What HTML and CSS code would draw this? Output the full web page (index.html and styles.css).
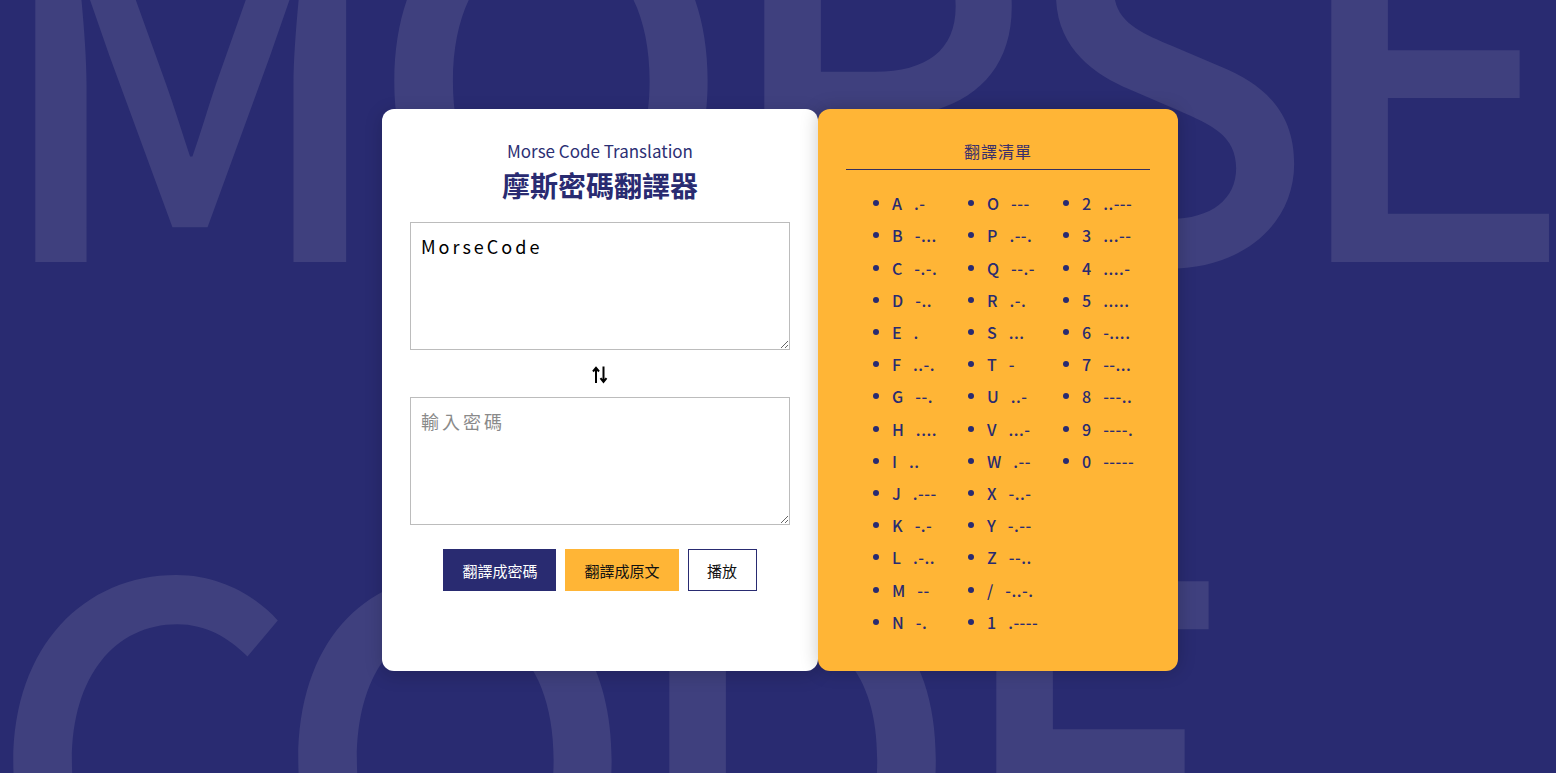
FILE: index.html
```html
<!DOCTYPE html>
<html lang="zh-Hant">
<head>
<meta charset="utf-8">
<title>摩斯密碼翻譯器</title>
<link rel="stylesheet" href="styles.css">
</head>
<body>
<div class="bg-words" aria-hidden="true">
  <div class="bg-line bg-line-1"><span class="gl gl-m">M</span><span class="gl gl-o1">O</span><span class="gl gl-r">R</span><span class="gl gl-s">S</span><span class="gl">E</span></div>
  <div class="bg-line bg-line-2"><span class="gl gl-c">C</span><span class="gl gl-o2">O</span><span class="gl gl-d">D</span><span class="gl">E</span></div>
</div>
<main class="stage">
  <div class="panel">
    <section class="card card-main">
      <p class="subtitle">Morse Code Translation</p>
      <h1 class="title">摩斯密碼翻譯器</h1>
      <textarea class="field">MorseCode</textarea>
      <div class="swap">
        <svg width="16" height="18" viewBox="0 0 16 18" aria-hidden="true">
          <path d="M4 17V2.5M1 5.5L4 1.8L7 5.5" fill="none" stroke="#000" stroke-width="2"/>
          <path d="M11.5 0.5V15.2M8.5 12.2L11.5 15.9L14.5 12.2" fill="none" stroke="#000" stroke-width="2"/>
        </svg>
      </div>
      <textarea class="field" placeholder="輸入密碼"></textarea>
      <div class="actions">
        <button class="btn btn-dark">翻譯成密碼</button>
        <button class="btn btn-yellow">翻譯成原文</button>
        <button class="btn btn-outline">播放</button>
      </div>
    </section>
    <section class="card card-list">
      <h2 class="list-title">翻譯清單</h2>
      <ul class="codes">
        <li><span class="ch">A</span><span class="cd">.-</span></li>
        <li><span class="ch">B</span><span class="cd">-...</span></li>
        <li><span class="ch">C</span><span class="cd">-.-.</span></li>
        <li><span class="ch">D</span><span class="cd">-..</span></li>
        <li><span class="ch">E</span><span class="cd">.</span></li>
        <li><span class="ch">F</span><span class="cd">..-.</span></li>
        <li><span class="ch">G</span><span class="cd">--.</span></li>
        <li><span class="ch">H</span><span class="cd">....</span></li>
        <li><span class="ch">I</span><span class="cd">..</span></li>
        <li><span class="ch">J</span><span class="cd">.---</span></li>
        <li><span class="ch">K</span><span class="cd">-.-</span></li>
        <li><span class="ch">L</span><span class="cd">.-..</span></li>
        <li><span class="ch">M</span><span class="cd">--</span></li>
        <li><span class="ch">N</span><span class="cd">-.</span></li>
        <li><span class="ch">O</span><span class="cd">---</span></li>
        <li><span class="ch">P</span><span class="cd">.--.</span></li>
        <li><span class="ch">Q</span><span class="cd">--.-</span></li>
        <li><span class="ch">R</span><span class="cd">.-.</span></li>
        <li><span class="ch">S</span><span class="cd">...</span></li>
        <li><span class="ch">T</span><span class="cd">-</span></li>
        <li><span class="ch">U</span><span class="cd">..-</span></li>
        <li><span class="ch">V</span><span class="cd">...-</span></li>
        <li><span class="ch">W</span><span class="cd">.--</span></li>
        <li><span class="ch">X</span><span class="cd">-..-</span></li>
        <li><span class="ch">Y</span><span class="cd">-.--</span></li>
        <li><span class="ch">Z</span><span class="cd">--..</span></li>
        <li><span class="ch">/</span><span class="cd">-..-.</span></li>
        <li><span class="ch">1</span><span class="cd">.----</span></li>
        <li><span class="ch">2</span><span class="cd">..---</span></li>
        <li><span class="ch">3</span><span class="cd">...--</span></li>
        <li><span class="ch">4</span><span class="cd">....-</span></li>
        <li><span class="ch">5</span><span class="cd">.....</span></li>
        <li><span class="ch">6</span><span class="cd">-....</span></li>
        <li><span class="ch">7</span><span class="cd">--...</span></li>
        <li><span class="ch">8</span><span class="cd">---..</span></li>
        <li><span class="ch">9</span><span class="cd">----.</span></li>
        <li><span class="ch">0</span><span class="cd">-----</span></li>
      </ul>
    </section>
  </div>
</main>
</body>
</html>
```

FILE: styles.css
```css
* { box-sizing: border-box; }

html, body {
  margin: 0;
  height: 100%;
}

body {
  background: #292b71;
  font-family: "Noto Sans CJK TC", "Noto Sans", sans-serif;
  color: #292b71;
  overflow: hidden;
  position: relative;
}

.bg-words {
  position: absolute;
  left: 0;
  top: -290px;
  z-index: 0;
  color: #3f407e;
  font-family: "Noto Sans CJK TC", "Noto Sans", sans-serif;
  font-size: 488px;
  font-weight: 500;
  line-height: 679px;
  white-space: nowrap;
  pointer-events: none;
}

.bg-line {
  display: flex;
}

.bg-line-1 { margin-left: -12px; }
.bg-line-2 { margin-left: -14px; }

.gl { display: block; flex: none; }
.gl-m { width: 379px; }
.gl-o1 { width: 350px; }
.gl-r { width: 301px; }
.gl-s { width: 266px; }
.gl-c { width: 285px; }
.gl-o2 { width: 351px; }
.gl-d { width: 327px; }

.stage {
  position: relative;
  z-index: 1;
  height: 100%;
  display: flex;
  justify-content: center;
  align-items: center;
  padding-top: 7px;
  padding-left: 4px;
}

.panel {
  display: flex;
  align-items: stretch;
}

.card {
  border-radius: 12px;
  padding: 30px 28px 33px;
}

.card-main {
  width: 436px;
  background: #fff;
  display: flex;
  flex-direction: column;
  align-items: center;
  box-shadow: 0 4px 18px rgba(0, 0, 0, 0.18);
}

.card-list {
  width: 360px;
  background: #ffb536;
  box-shadow: 0 0 18px rgba(0, 0, 0, 0.22);
}

.subtitle {
  margin: 0;
  font-size: 17px;
  line-height: 24px;
  color: #2c2f74;
}

.title {
  margin: 0 0 15px;
  font-size: 28px;
  line-height: 44px;
  font-weight: 700;
  color: #292b71;
}

.field {
  display: block;
  width: 380px;
  height: 128px;
  margin: 0;
  padding: 10px 10px;
  border: 1px solid #bcbcbc;
  border-radius: 0;
  font-family: "Noto Sans CJK TC", "Noto Sans", sans-serif;
  font-size: 18px;
  line-height: 26px;
  letter-spacing: 3px;
  color: #000;
  background: #fff;
  outline: none;
}

.field::placeholder { color: #8a8a8a; }

.swap {
  height: 23px;
  margin: 13px 0 11px;
  display: flex;
  align-items: center;
  justify-content: center;
}

.swap svg { display: block; }

.actions {
  margin-top: 24px;
  display: flex;
  gap: 9px;
  justify-content: center;
}

.btn {
  height: 42px;
  padding: 0 19px;
  border: 0;
  border-radius: 0;
  font-family: "Noto Sans CJK TC", "Noto Sans", sans-serif;
  font-size: 15px;
  cursor: pointer;
}

.btn-dark { background: #292b71; color: #fff; }
.btn-yellow { background: #ffb536; color: #111; }
.btn-outline { background: #fff; color: #111; border: 1px solid #292b71; padding: 0 18.5px; }

.list-title {
  margin: 0;
  padding-bottom: 6px;
  border-bottom: 1px solid #35305f;
  text-align: center;
  font-size: 16px;
  line-height: 24px;
  font-weight: 400;
  letter-spacing: 1px;
  color: #3a2f6b;
}

.codes {
  list-style: none;
  margin: 17px 0 0;
  padding: 0 0 0 27px;
  display: grid;
  grid-template-columns: repeat(3, 95px);
  grid-template-rows: repeat(14, 32.2px);
  grid-auto-flow: column;
  font-size: 16px;
  color: #292b71;
}

.codes li {
  display: flex;
  align-items: center;
  font-weight: 500;
}

.codes li::before {
  content: "";
  width: 6px;
  height: 6px;
  border-radius: 50%;
  background: #292b71;
  margin-right: 13px;
  flex: none;
}

.cd {
  margin-left: 12px;
  letter-spacing: 0.5px;
}
```
